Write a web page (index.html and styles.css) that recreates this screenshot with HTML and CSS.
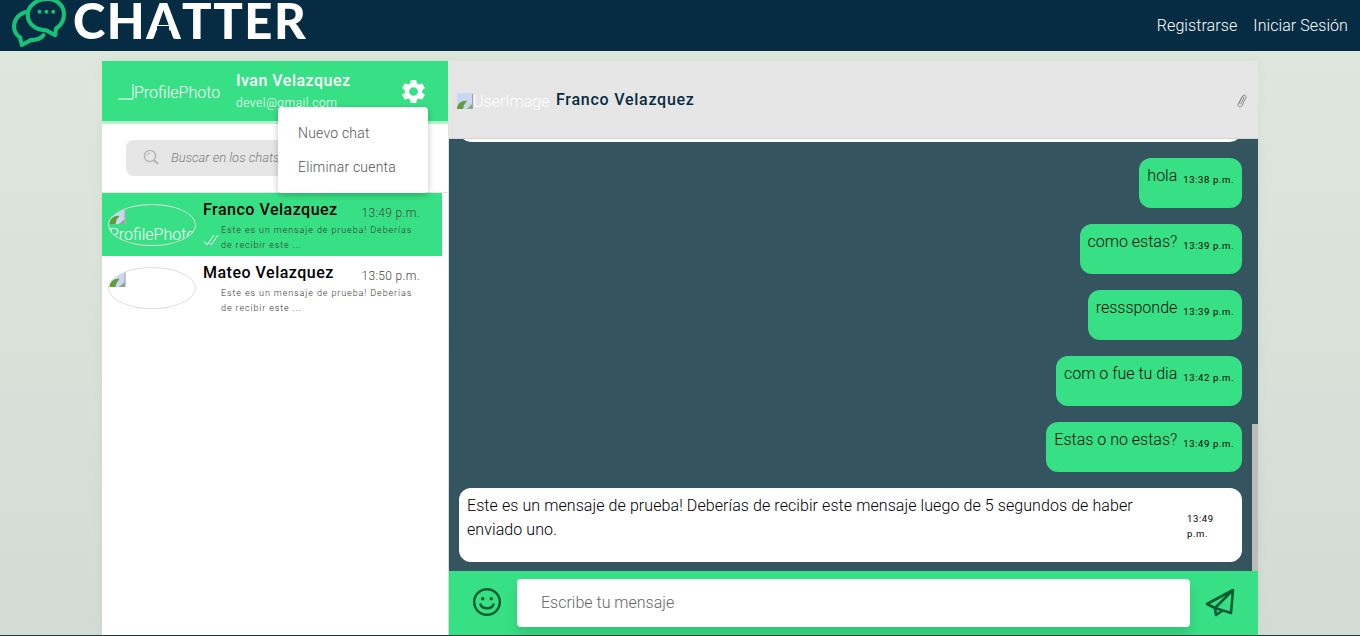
FILE: index.html
```html
<!DOCTYPE html>
<html lang="es">
<head>
<meta charset="utf-8">
<title>Chatter</title>
<link rel="stylesheet" href="styles.css">
</head>
<body>
<svg class="defs" width="0" height="0" aria-hidden="true">
  <symbol id="broken" viewBox="0 0 16 16">
    <path d="M0 16V0h16v16z" fill="#c9d8f0"/>
    <path d="M0 14c2-5 6-7 10-6l-3 4-1 4H0z" fill="#5f9e3c"/>
    <path d="M10 16l5-5v5z" fill="#7fae62"/>
    <path d="M15.500 1v14.500H10" fill="none" stroke="#9da1aa"/>
  </symbol>
</svg>
<header class="topbar">
  <div class="brand">
    <svg class="brand-icon" viewBox="0 0 56 48" fill="none" stroke="#15c277" stroke-width="4.200" stroke-linejoin="round" stroke-linecap="round">
      <path d="M15 12C6 14 2 21 2 27c0 5 3 9 6 11l2 8 9-5c5 0 10-1 13-5"/>
      <path d="M36 -1c10 0 17 7 17 15 0 7-3 12-8 15l-1 7-9-5c-10 0-19-6-19-16 0-9 9-16 20-16z"/>
      <circle cx="28" cy="12" r="2" fill="#15c277" stroke="none"/>
      <circle cx="35" cy="12" r="2" fill="#15c277" stroke="none"/>
      <circle cx="42" cy="12" r="2" fill="#15c277" stroke="none"/>
    </svg>
    <span class="brand-name">CH<span class="brand-a">A</span>TTER</span>
  </div>
  <nav class="topnav">
    <a href="#">Registrarse</a>
    <a href="#">Iniciar Sesión</a>
  </nav>
</header>

<main class="shell">
  <aside class="side">
    <div class="me">
      <div class="me-photo"><svg class="me-broken" viewBox="0 0 16 16"><path d="M0 15h15V0" fill="none" stroke="#fff"/></svg><span>ProfilePhoto</span></div>
      <div class="me-info">
        <div class="me-name">Ivan Velazquez</div>
        <div class="me-mail">devel@gmail.com</div>
      </div>
      <svg class="gear" viewBox="0 0 24 24"><path fill="#fff" d="M19.14 12.94c.04-.3.06-.61.06-.94 0-.32-.02-.64-.07-.94l2.03-1.58a.49.49 0 0 0 .12-.61l-1.92-3.32a.488.488 0 0 0-.59-.22l-2.39.96c-.5-.38-1.03-.7-1.62-.94l-.36-2.54a.484.484 0 0 0-.48-.41h-3.84c-.24 0-.43.17-.47.41l-.36 2.54c-.59.24-1.13.57-1.62.94l-2.39-.96c-.22-.08-.47 0-.59.22L2.74 8.87c-.12.21-.08.47.12.61l2.03 1.58c-.05.3-.09.63-.09.94s.02.64.07.94l-2.03 1.58a.49.49 0 0 0-.12.61l1.92 3.32c.12.22.37.29.59.22l2.39-.96c.5.38 1.03.7 1.62.94l.36 2.54c.05.24.24.41.48.41h3.84c.24 0 .44-.17.47-.41l.36-2.54c.59-.24 1.13-.56 1.62-.94l2.39.96c.22.08.47 0 .59-.22l1.92-3.32c.12-.22.07-.47-.12-.61l-2.01-1.58zM12 15.600c-1.98 0-3.6-1.62-3.6-3.6s1.62-3.6 3.6-3.6 3.6 1.62 3.6 3.6-1.62 3.6-3.6 3.6z"/></svg>
      <div class="menu">
        <div class="menu-item">Nuevo chat</div>
        <div class="menu-item">Eliminar cuenta</div>
      </div>
    </div>
    <div class="search-wrap">
      <div class="search">
        <svg class="search-icon" viewBox="0 0 16 16" fill="none" stroke="#b4b4b4" stroke-width="1.400"><circle cx="7" cy="7" r="5.600"/><path d="M4 6.500a3 3 0 0 1 3-2.400" stroke-width="1"/><path d="M11 11l4 4" stroke-width="2"/></svg>
        <span class="search-text">Buscar en los chats</span>
      </div>
    </div>
    <ul class="chats">
      <li class="chat active">
        <div class="avatar"><svg class="broken"><use href="#broken"/></svg><span>ProfilePhoto</span></div>
        <div class="chat-body">
          <div class="chat-top"><span class="chat-name">Franco Velazquez</span><span class="chat-time">13:49 p.m.</span></div>
          <div class="chat-msg">
            <svg class="ticks" viewBox="0 0 16 12" fill="none" stroke="#fff" stroke-width="1"><path d="M1 7l3 4 7-10M6 9l2 2 7-10"/></svg>
            <p>Este es un mensaje de prueba! Deberías de recibir este ...</p>
          </div>
        </div>
      </li>
      <li class="chat">
        <div class="avatar"><svg class="broken"><use href="#broken"/></svg></div>
        <div class="chat-body">
          <div class="chat-top"><span class="chat-name">Mateo Velazquez</span><span class="chat-time">13:50 p.m.</span></div>
          <div class="chat-msg">
            <span class="ticks"></span>
            <p>Este es un mensaje de prueba! Deberías de recibir este ...</p>
          </div>
        </div>
      </li>
    </ul>
  </aside>

  <section class="conv">
    <div class="conv-head">
      <div class="conv-photo"><svg class="broken"><use href="#broken"/></svg><span>UserImage</span></div>
      <div class="conv-name">Franco Velazquez</div>
      <svg class="clip" viewBox="0 0 14 18" fill="none" stroke="#8a8a8a" stroke-width="1.200"><path d="M4 13.500 9 3.500c1-2 5-.5 4 2L8 15.500c-1 2-5.500 1-4.500-2L8 5c.6-1.200 3-.5 2.500 1L6.500 13.500"/></svg>
    </div>
    <div class="msgs">
      <div class="bubble in prev"></div>
      <div class="bubble out"><span class="text">hola</span><span class="time">13:38 p.m.</span></div>
      <div class="bubble out"><span class="text">como estas?</span><span class="time">13:39 p.m.</span></div>
      <div class="bubble out"><span class="text">resssponde</span><span class="time">13:39 p.m.</span></div>
      <div class="bubble out"><span class="text">com o fue tu dia</span><span class="time">13:42 p.m.</span></div>
      <div class="bubble out"><span class="text">Estas o no estas?</span><span class="time">13:49 p.m.</span></div>
      <div class="bubble in"><span class="text">Este es un mensaje de prueba! Deberías de recibir este mensaje luego de 5 segundos de haber enviado uno.</span><span class="time">13:49 p.m.</span></div>
      <div class="thumb"></div>
    </div>
    <div class="composer">
      <svg class="smile" viewBox="0 0 28 28" fill="none" stroke="#0b5c33" stroke-width="2.400"><circle cx="14" cy="14" r="12.800"/><path d="M7.500 16.500c2 5 11 5 13 0" stroke-linecap="round"/><circle cx="9.800" cy="10.800" r="1.700" fill="#0b5c33" stroke="none"/><circle cx="18.200" cy="10.800" r="1.700" fill="#0b5c33" stroke="none"/></svg>
      <div class="field">Escribe tu mensaje</div>
      <svg class="send" viewBox="0 0 30 30" fill="none" stroke="#0b5c33" stroke-width="2.600" stroke-linejoin="round"><path d="M28 2 2 16l8 4 16 5zM28 2 10 20l1 7 6-4"/></svg>
    </div>
  </section>
</main>
<div class="foot"></div>
</body>
</html>
```
FILE: styles.css
```css
* { box-sizing: border-box; }
html, body { height: 100%; }
body {
  margin: 0;
  height: 636px;
  overflow: hidden;
  display: flex;
  flex-direction: column;
  font-family: Roboto, "Liberation Sans", sans-serif;
  background: linear-gradient(180deg, #dee8dd 0%, #d2dcd5 100%);
}
.defs { position: absolute; }

.topbar {
  height: 51px;
  flex: none;
  background: #062c43;
  display: flex;
  justify-content: space-between;
  padding: 0 12px;
}
.brand { display: flex; align-items: flex-start; gap: 6px; }
.brand-icon { width: 55px; height: 47px; overflow: hidden; flex: none; }
.brand-name {
  font-family: Lato, sans-serif;
  font-weight: 900;
  font-size: 49px;
  line-height: 40px;
  letter-spacing: 1.500px;
  color: #fff;
}
.brand-a { position: relative; }
.brand-a::after {
  content: "";
  position: absolute;
  left: 11px;
  right: 13px;
  top: 35px;
  height: 10px;
  background: #062c43;
}
.topnav { display: flex; align-items: center; gap: 16px; }
.topnav a { color: #fff; font-size: 16px; font-weight: 300; letter-spacing: .08px; text-decoration: none; }

.shell {
  flex: 1;
  min-height: 0;
  margin: 10px 102px 0;
  display: flex;
  box-shadow: 0 0 12px rgba(0, 0, 0, .04);
}

.side { width: 346px; flex: none; background: #fff; display: flex; flex-direction: column; }
.me {
  position: relative;
  height: 63px;
  flex: none;
  background: #38e085;
  border-bottom: 3px solid #b2f5cd;
  display: flex;
  align-items: flex-start;
  color: #fff;
}
.me-photo {
  width: 102px;
  margin: 21px 0 0 16px;
  display: flex;
  align-items: flex-end;
  overflow: hidden;
  font-size: 16px;
  font-weight: 300;
  line-height: 21px;
  white-space: nowrap;
}
.me-broken { width: 16px; height: 16px; flex: none; margin-bottom: 3px; }
.me-info { margin: 9px 0 0 16px; width: 155px; }
.me-name { font-size: 16px; font-weight: 500; line-height: 21px; letter-spacing: .5px; }
.me-mail { font-size: 12px; font-weight: 300; line-height: 14px; margin-top: 5px; letter-spacing: .5px; }
.gear { width: 29px; height: 29px; margin-top: 16px; margin-left: 8px; flex: none; }
.menu {
  position: absolute;
  left: 176px;
  top: 46px;
  width: 150px;
  height: 86px;
  padding-top: 9px;
  background: #fff;
  border-radius: 4px;
  box-shadow: 0 2px 6px rgba(0, 0, 0, .25);
  color: #555;
  z-index: 5;
}
.menu-item { height: 34px; padding-left: 20px; font-size: 14px; line-height: 34px; letter-spacing: .2px; font-weight: 300; }

.search-wrap { height: 69px; flex: none; padding: 16px 0 0 24px; border-bottom: 1px solid #e4e4e4; }
.search {
  width: 220px;
  height: 36px;
  background: #e6e6e6;
  border-radius: 8px;
  display: flex;
  align-items: center;
  padding: 0 0 2px 17px;
  overflow: hidden;
}
.search-icon { width: 16px; height: 16px; flex: none; }
.search-text { margin-left: 12px; font-size: 13px; font-style: italic; font-weight: 300; color: #7d7d7d; white-space: nowrap; }

.chats { list-style: none; margin: 0; padding: 0; width: 340px; }
.chat { height: 63px; display: flex; padding: 11px 0 0 6px; color: #000; }
.chat.active { background: #38e085; }
.avatar {
  width: 88px;
  height: 42px;
  flex: none;
  border: 1px solid #dcdcdc;
  border-radius: 50%;
  overflow: hidden;
  font-size: 16px;
  font-weight: 300;
  line-height: 21px;
  color: #fff;
  white-space: nowrap;
  display: flex;
  flex-direction: column;
}
.avatar .broken { margin-top: 3px; width: 17px; }
.broken { width: 16px; height: 16px; flex: none; }
.chat-body { width: 217px; margin: -5px 0 0 7px; }
.chat-top { display: flex; justify-content: space-between; align-items: flex-end; }
.chat-name { font-size: 16px; font-weight: 500; line-height: 22px; letter-spacing: .5px; }
.chat-time { font-size: 12px; font-weight: 300; color: #444; line-height: 18px; letter-spacing: .35px; margin-bottom: -1px; }
.chat-msg { display: flex; align-items: center; margin-top: 2px; }
.ticks { width: 16px; height: 12px; flex: none; margin: 4px 2px 0 0; }
.chat-msg p { margin: 0; font-size: 9px; font-weight: 300; line-height: 15px; letter-spacing: .9px; color: #333; }

.conv { flex: 1; min-width: 0; margin-left: 1px; display: flex; flex-direction: column; }
.conv-head {
  height: 78px;
  flex: none;
  background: #e6e6e6;
  border-bottom: 1px solid #cfd8d4;
  display: flex;
  align-items: center;
  padding: 0 11px 0 8px;
}
.conv-photo {
  width: 92px;
  height: 22px;
  margin-top: 3px;
  display: flex;
  align-items: center;
  overflow: hidden;
  color: #fff;
  font-size: 16px;
  font-weight: 300;
  white-space: nowrap;
}
.conv-name { margin-left: 7px; font-size: 16px; font-weight: 500; color: #062c43; letter-spacing: .75px; }
.clip { width: 12px; height: 15px; margin-left: auto; margin-top: 1px; }

.msgs {
  position: relative;
  flex: 1;
  min-height: 0;
  background: #34555f;
  overflow: hidden;
  display: flex;
  flex-direction: column;
  justify-content: flex-end;
  align-items: flex-end;
  gap: 16px;
  padding: 0 16px 9px 10px;
}
.bubble {
  flex: none;
  display: flex;
  align-items: flex-start;
  border-radius: 12px;
  padding: 6px 8px 5px;
  color: #0d0d0d;
  min-height: 50px;
}
.bubble.out { background: #38e085; }
.bubble.in { background: #fff; width: 783px; color: #000; }
.prev { height: 50px; }
.text { font-size: 16px; font-weight: 300; line-height: 24px; }
.time { flex: none; font-size: 9.500px; font-weight: 400; letter-spacing: .6px; margin: 8px 0 0 6px; line-height: 15px; color: #000; }
.bubble.in { padding-bottom: 20px; justify-content: space-between; }
.bubble.in .text { width: 680px; letter-spacing: .08px; }
.bubble.in .time { width: 47px; margin-top: 17px; }
.thumb { position: absolute; right: 0; bottom: 0; width: 6px; height: 147px; background: #bcbcbc; }

.composer {
  height: 64px;
  flex: none;
  background: #38e085;
  display: flex;
  align-items: flex-start;
  padding: 8px 0 0 24px;
}
.smile { width: 28px; height: 28px; flex: none; margin-top: 9px; }
.field {
  width: 673px;
  height: 48px;
  margin-left: 16px;
  padding-left: 24px;
  background: #fff;
  border-radius: 4px;
  box-shadow: 0 8px 12px rgba(0, 0, 0, .12);
  font-size: 16px;
  font-weight: 300;
  line-height: 47px;
  color: #666;
}
.send { width: 30px; height: 30px; flex: none; margin: 9px 0 0 15px; }

.foot { height: 1px; flex: none; background: #1c3b3f; }
```
